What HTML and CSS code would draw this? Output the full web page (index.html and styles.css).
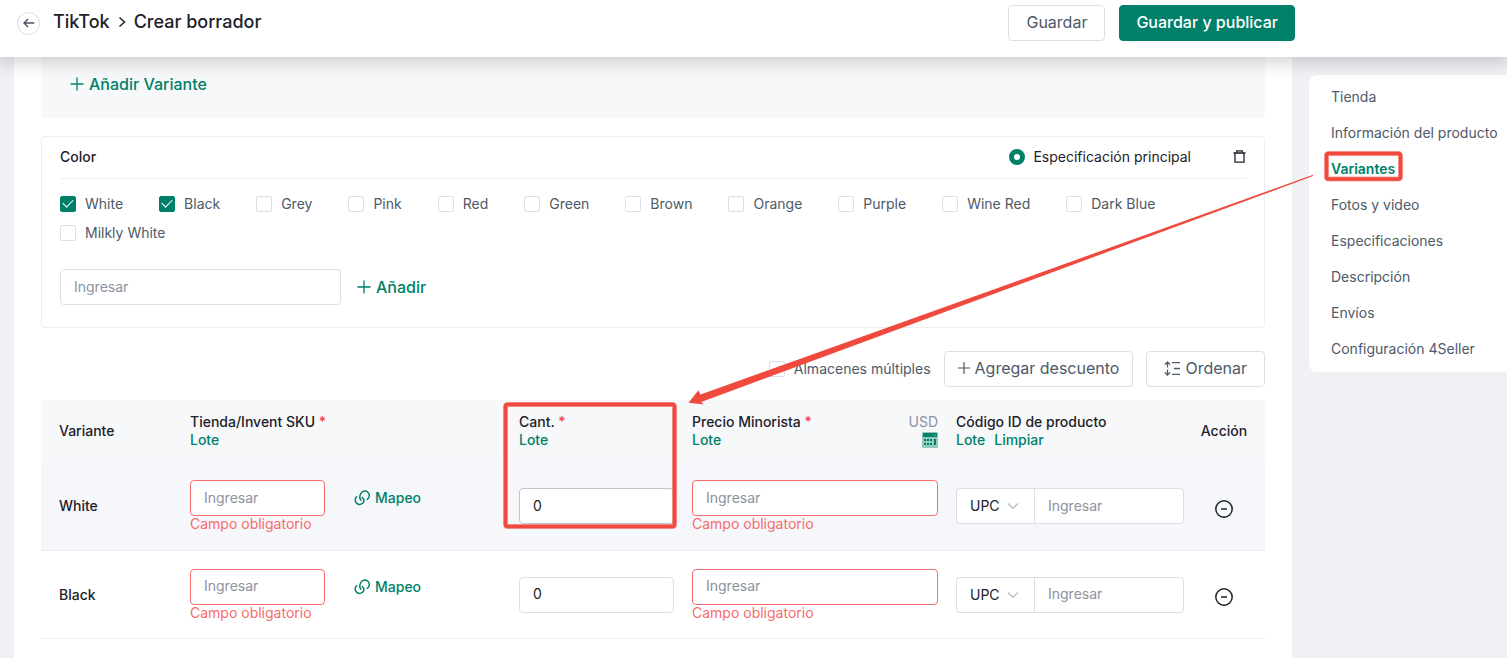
FILE: index.html
```html
<!DOCTYPE html>
<html lang="es">
<head>
<meta charset="utf-8">
<meta name="viewport" content="width=device-width, initial-scale=1">
<title>TikTok - Crear borrador</title>
<link rel="stylesheet" href="styles.css">
</head>
<body>
<header class="topbar">
  <button class="back" type="button" aria-label="Volver">
    <svg width="12" height="10" viewBox="0 0 12 10" fill="none" stroke="currentColor" stroke-width="1.4"><path d="M11.3 5H1M5 1 1 5l4 4"/></svg>
  </button>
  <h1 class="crumbs"><span>TikTok</span>
    <svg width="8" height="12" viewBox="0 0 8 12" fill="none" stroke="currentColor" stroke-width="1.5"><path d="m1.5 1.5 5 4.5-5 4.5"/></svg>
    <span>Crear borrador</span></h1>
  <div class="topbar-actions">
    <button class="btn" type="button">Guardar</button>
    <button class="btn btn-primary" type="button">Guardar y publicar</button>
  </div>
</header>

<div class="layout">
  <main class="main">
    <section class="add-panel">
      <button class="link-btn" type="button">
        <svg width="14" height="14" viewBox="0 0 14 14" stroke="currentColor" stroke-width="1.3"><path d="M7 .5v13M.5 7h13"/></svg>
        Añadir Variante</button>
    </section>

    <section class="color-card">
      <div class="color-head">
        <h2 class="card-title">Color</h2>
        <label class="radio-label"><input class="radio" type="radio" name="spec" checked>Especificación principal</label>
        <button class="icon-btn" type="button" aria-label="Eliminar">
          <svg width="13" height="13" viewBox="0 0 13 13" fill="none" stroke="currentColor" stroke-width="1.3"><path d="M.5 3h12M3.8 3V.8h5.4V3M2 3v9.2h9V3"/></svg>
        </button>
      </div>
      <div class="checks">
        <label class="check-label"><input class="check" type="checkbox" checked>White</label>
        <label class="check-label"><input class="check" type="checkbox" checked>Black</label>
        <label class="check-label"><input class="check" type="checkbox">Grey</label>
        <label class="check-label"><input class="check" type="checkbox">Pink</label>
        <label class="check-label"><input class="check" type="checkbox">Red</label>
        <label class="check-label"><input class="check" type="checkbox">Green</label>
        <label class="check-label"><input class="check" type="checkbox">Brown</label>
        <label class="check-label"><input class="check" type="checkbox">Orange</label>
        <label class="check-label"><input class="check" type="checkbox">Purple</label>
        <label class="check-label"><input class="check" type="checkbox">Wine Red</label>
        <label class="check-label"><input class="check" type="checkbox">Dark Blue</label>
        <label class="check-label"><input class="check" type="checkbox">Milkly White</label>
      </div>
      <div class="add-row">
        <input class="field field-color" type="text" placeholder="Ingresar" aria-label="Color">
        <button class="link-btn" type="button">
          <svg width="14" height="14" viewBox="0 0 14 14" stroke="currentColor" stroke-width="1.3"><path d="M7 .5v13M.5 7h13"/></svg>
          Añadir</button>
      </div>
    </section>

    <div class="toolbar">
      <label class="check-label"><input class="check" type="checkbox">Almacenes múltiples</label>
      <button class="btn btn-tool" type="button">
        <svg width="12" height="12" viewBox="0 0 12 12" stroke="currentColor" stroke-width="1.2"><path d="M6 0v12M0 6h12"/></svg>
        Agregar descuento</button>
      <button class="btn btn-sort" type="button">
        <svg width="17" height="15" viewBox="0 0 17 15" fill="none" stroke="currentColor" stroke-width="1.3"><path d="M3.5 1v5.500M3.500 8.500V14M.8 3.600 3.500 1l2.700 2.600M.8 11.400 3.500 14l2.700-2.600M8 1.700h8M10 7.500h6M8 13.300h8"/></svg>
        Ordenar</button>
    </div>

    <table class="variants">
      <colgroup>
        <col class="c-name"><col class="c-sku"><col class="c-qty"><col class="c-price"><col class="c-code"><col class="c-action">
      </colgroup>
      <thead>
        <tr>
          <th>Variante</th>
          <th>Tienda/Invent SKU <span class="req">*</span><div class="th-links"><a href="#">Lote</a></div></th>
          <th>Cant. <span class="req">*</span><div class="th-links"><a href="#">Lote</a></div></th>
          <th>
            <div class="price-head">
              <div>Precio Minorista <span class="req">*</span><div class="th-links"><a href="#">Lote</a></div></div>
              <div class="currency">USD
                <svg width="16" height="16" viewBox="0 0 16 16"><rect width="16" height="16" rx="1.500" fill="#93cabd"/><path fill="#008068" d="M1 1h14v4H1zM2 7h2v2H2zM5 7h2v2H5zM8 7h2v2H8zM2 11h2v2H2zM5 11h2v2H5zM8 11h2v2H8zM12 7h2v6h-2z"/><path fill="#93cabd" d="M11 2.500h1v1h-1zM13 2.500h1v1h-1z"/></svg>
              </div>
            </div>
          </th>
          <th>Código ID de producto<div class="th-links"><a href="#">Lote</a><a href="#">Limpiar</a></div></th>
          <th class="action">Acción</th>
        </tr>
      </thead>
      <tbody>
        <tr class="active">
          <td>White</td>
          <td><div class="sku">
            <div><input class="field field-error" type="text" placeholder="Ingresar" aria-label="SKU White"><div class="error">Campo obligatorio</div></div>
            <button class="map-btn" type="button"><svg width="17" height="16" viewBox="0 0 17 16" fill="none" stroke="currentColor" stroke-width="1.500" stroke-linecap="round"><path d="M2.600 6.800A4.400 4.400 0 1 0 9.300 12.400C10.200 10.900 10 9 8.300 7.500M6.900 10.100C5.500 8.500 5.700 5.900 6.600 4A4.500 4.500 0 1 1 13.300 9.300"/></svg>Mapeo</button>
          </div></td>
          <td><input class="field field-hover" type="text" value="0" aria-label="Cantidad White"></td>
          <td><input class="field field-error" type="text" placeholder="Ingresar" aria-label="Precio White"><div class="error">Campo obligatorio</div></td>
          <td><div class="code">
            <select class="code-type" aria-label="Tipo de código White"><option>UPC</option><option>EAN</option></select>
            <input class="field code-value" type="text" placeholder="Ingresar" aria-label="Código White">
          </div></td>
          <td class="action"><button class="icon-btn remove" type="button" aria-label="Quitar White"><svg width="20" height="20" viewBox="0 0 20 20" fill="none" stroke="currentColor" stroke-width="1.500"><circle cx="10" cy="10" r="8.200"/><path d="M7 10h6"/></svg></button></td>
        </tr>
        <tr>
          <td>Black</td>
          <td><div class="sku">
            <div><input class="field field-error" type="text" placeholder="Ingresar" aria-label="SKU Black"><div class="error">Campo obligatorio</div></div>
            <button class="map-btn" type="button"><svg width="17" height="16" viewBox="0 0 17 16" fill="none" stroke="currentColor" stroke-width="1.500" stroke-linecap="round"><path d="M2.600 6.800A4.400 4.400 0 1 0 9.300 12.400C10.200 10.900 10 9 8.300 7.500M6.900 10.100C5.500 8.500 5.700 5.900 6.600 4A4.500 4.500 0 1 1 13.300 9.300"/></svg>Mapeo</button>
          </div></td>
          <td><input class="field" type="text" value="0" aria-label="Cantidad Black"></td>
          <td><input class="field field-error" type="text" placeholder="Ingresar" aria-label="Precio Black"><div class="error">Campo obligatorio</div></td>
          <td><div class="code">
            <select class="code-type" aria-label="Tipo de código Black"><option>UPC</option><option>EAN</option></select>
            <input class="field code-value" type="text" placeholder="Ingresar" aria-label="Código Black">
          </div></td>
          <td class="action"><button class="icon-btn remove" type="button" aria-label="Quitar Black"><svg width="20" height="20" viewBox="0 0 20 20" fill="none" stroke="currentColor" stroke-width="1.500"><circle cx="10" cy="10" r="8.200"/><path d="M7 10h6"/></svg></button></td>
        </tr>
      </tbody>
    </table>
  </main>

  <nav class="side">
    <a href="#">Tienda</a>
    <a href="#">Información del producto</a>
    <a href="#" class="current">Variantes</a>
    <a href="#">Fotos y video</a>
    <a href="#">Especificaciones</a>
    <a href="#">Descripción</a>
    <a href="#">Envíos</a>
    <a href="#">Configuración 4Seller</a>
  </nav>
</div>

<svg class="marks" viewBox="0 0 1507 658" aria-hidden="true">
  <g fill="none" stroke="#f04a3e">
    <g stroke-width="5" opacity=".5"><rect x="1326.500" y="153.500" width="74" height="25.500" rx="2"/><rect x="505.500" y="404.500" width="169" height="122" rx="2"/></g>
    <g stroke-width="3.500"><rect x="1326.500" y="153.500" width="74" height="25.500" rx="2"/><rect x="505.500" y="404.500" width="169" height="122" rx="2"/></g>
  </g>
  <path fill="#f04a3e" d="M688.500 402.800 698.400 390.300 700.500 394.600 1313 174.800V176L701.200 402 703.800 404.400Z"/>
</svg>
</body>
</html>
```
FILE: styles.css
```css
* { box-sizing: border-box; }

body {
  margin: 0;
  min-height: 100vh;
  display: flex;
  flex-direction: column;
  position: relative;
  overflow-x: hidden;
  background: #f0f1f5;
  color: #1d2129;
  font: 14px/18px Inter, "Liberation Sans", sans-serif;
}

button, input, select { font: inherit; color: inherit; }
button { cursor: pointer; }
a { text-decoration: none; color: inherit; }
svg { display: block; flex: none; }

.topbar {
  position: sticky;
  top: 0;
  z-index: 1;
  display: flex;
  align-items: center;
  padding: 5px 212px 16px 17px;
  background: #fff;
  box-shadow: 0 0 18px 4px rgba(0, 0, 0, .2);
}
.back {
  display: flex;
  align-items: center;
  justify-content: center;
  width: 23px;
  height: 23px;
  padding: 0;
  border: 1px solid #d9dbe3;
  border-radius: 50%;
  background: #fff;
  color: #4a5568;
}
.crumbs {
  display: flex;
  align-items: center;
  gap: 8px;
  margin: 0 0 0 13px;
  padding-bottom: 2px;
  font-size: 18px;
  line-height: 24px;
  font-weight: 500;
}
.topbar-actions { display: flex; gap: 14px; margin-left: auto; }

.btn {
  display: flex;
  align-items: center;
  justify-content: center;
  height: 36px;
  padding: 0 17px 2px;
  border: 1px solid #dcdfe6;
  border-radius: 4px;
  background: #fff;
  color: #4e5969;
  font-size: 16px;
  white-space: nowrap;
}
.btn-primary {
  padding: 0 16px 2px;
  border-color: #008068;
  background: #008068;
  color: #fff;
  font-weight: 500;
}

.layout {
  flex: 1;
  display: flex;
  gap: 17px;
  padding-left: 14px;
}
.main {
  flex: 1;
  min-width: 0;
  padding: 0 27px 19px;
  background: #fff;
}

.add-panel {
  padding: 15px 29px 22px;
  border-radius: 0 0 4px 4px;
  background: #f7f8fa;
}
.link-btn {
  display: flex;
  align-items: center;
  gap: 5px;
  padding: 0;
  border: 0;
  background: none;
  color: #008068;
  font-size: 16px;
  line-height: 24px;
  font-weight: 500;
}

.color-card {
  margin-top: 18px;
  padding: 0 18px 22px;
  border: 1px solid #ebeef5;
  border-radius: 4px;
}
.color-head {
  display: flex;
  align-items: center;
  height: 42px;
  padding-bottom: 2px;
  border-bottom: 1px solid #ebeef5;
}
.card-title { margin: 0 auto 0 0; font-size: 14px; font-weight: 500; }
.radio-label { display: flex; align-items: center; gap: 8px; margin-right: 42px; }
.radio {
  appearance: none;
  width: 16px;
  height: 16px;
  margin: 0;
  border: 5px solid #008068;
  border-radius: 50%;
  background: #fff;
}
.icon-btn { display: inline-flex; padding: 0; border: 0; background: none; }
.remove { display: flex; margin: 5px auto 0; }

.checks {
  display: flex;
  flex-wrap: wrap;
  column-gap: 36px;
  margin-top: 10px;
  line-height: 29px;
}
.check-label {
  display: flex;
  align-items: center;
  gap: 9px;
  color: #4e5969;
}
.check {
  appearance: none;
  width: 16px;
  height: 16px;
  margin: 0;
  border: 1px solid #dcdfe6;
  border-radius: 2px;
  background: #fff;
}
.check:checked {
  display: grid;
  place-items: center;
  border-color: #008068;
  background: #008068;
}
.check:checked::before {
  content: "";
  width: 9px;
  height: 5px;
  margin-bottom: 3px;
  border: solid #fff;
  border-width: 0 0 1px 1px;
  rotate: -45deg;
}

.add-row { display: flex; align-items: center; gap: 16px; margin-top: 22px; }
.field {
  display: block;
  width: 100%;
  height: 36px;
  padding: 0 13px 2px;
  border: 1px solid #dcdfe6;
  border-radius: 4px;
  background: #fff;
}
.field::placeholder { color: #8c93a1; opacity: 1; }
.field-color { width: 281px; }
.field-error { border-color: #f56c6c; }
.field-hover { border-color: #c0c4cc; }

.toolbar {
  display: flex;
  align-items: center;
  justify-content: flex-end;
  gap: 13px;
  margin: 23px 0 13px;
}
.btn-tool { gap: 5px; padding: 0 13px 2px; }
.btn-sort { gap: 4px; padding: 0 17px 2px; }

.variants {
  width: 100%;
  border-collapse: separate;
  border-spacing: 0;
  table-layout: fixed;
}
.c-name { width: 140px; }
.c-qty { width: 173px; }
.c-price { width: 264px; }
.c-code { width: 246px; }
.c-action { width: 72px; }
.variants th, .variants td {
  padding: 0 9px;
  text-align: left;
  vertical-align: middle;
  font-weight: 500;
}
.variants th { height: 62px; background: #f7f8fa; }
.variants td { height: 89px; border-bottom: 1px solid #ebeef5; }
.variants th:first-child, .variants td:first-child { padding-left: 18px; }
.variants .action { padding: 0 10px 0 0; text-align: center; }
.variants tr:last-child td { height: 88px; }
.active td { background: #f5f7fb; }
.variants input, .variants select { font-weight: 400; }

.req { color: #f53f3f; }
.th-links { display: flex; gap: 9px; color: #008068; }
.price-head { display: flex; justify-content: space-between; }
.currency {
  display: flex;
  flex-direction: column;
  align-items: flex-end;
  gap: 1px;
  color: #8c93a1;
  font-weight: 400;
}
.sku { display: grid; grid-template-columns: 135px auto; justify-content: start; align-items: start; gap: 29px; }
.error { color: #f56c6c; line-height: 16px; font-weight: 400; }
.map-btn {
  display: flex;
  align-items: center;
  gap: 4px;
  height: 36px;
  padding: 0;
  border: 0;
  background: none;
  color: #008068;
  font-weight: 500;
}
.code { display: flex; width: 228px; }
.code-type {
  appearance: none;
  width: 78px;
  height: 36px;
  padding: 0 13px;
  border: 1px solid #dcdfe6;
  border-right: 0;
  border-radius: 4px 0 0 4px;
  background: #fff url("data:image/svg+xml,%3Csvg xmlns='http://www.w3.org/2000/svg' width='12' height='8' fill='none' stroke='%23b4b9c4' stroke-width='1.2'%3E%3Cpath d='m1 1.500 5 5 5-5'/%3E%3C/svg%3E") no-repeat right 15px center;
}
.code-value { flex: 1; min-width: 0; border-radius: 0 4px 4px 0; }

.side {
  align-self: flex-start;
  width: 198px;
  margin-top: 18px;
  padding: 4px 0 5px 22px;
  border-radius: 8px 0 0 8px;
  background: #fff;
  color: #4e5969;
  line-height: 36px;
  white-space: nowrap;
}
.side a { display: block; }
.side .current { color: #008068; font-weight: 600; }

.marks {
  position: absolute;
  top: 0;
  left: 0;
  z-index: 2;
  width: 100%;
  pointer-events: none;
}
```
